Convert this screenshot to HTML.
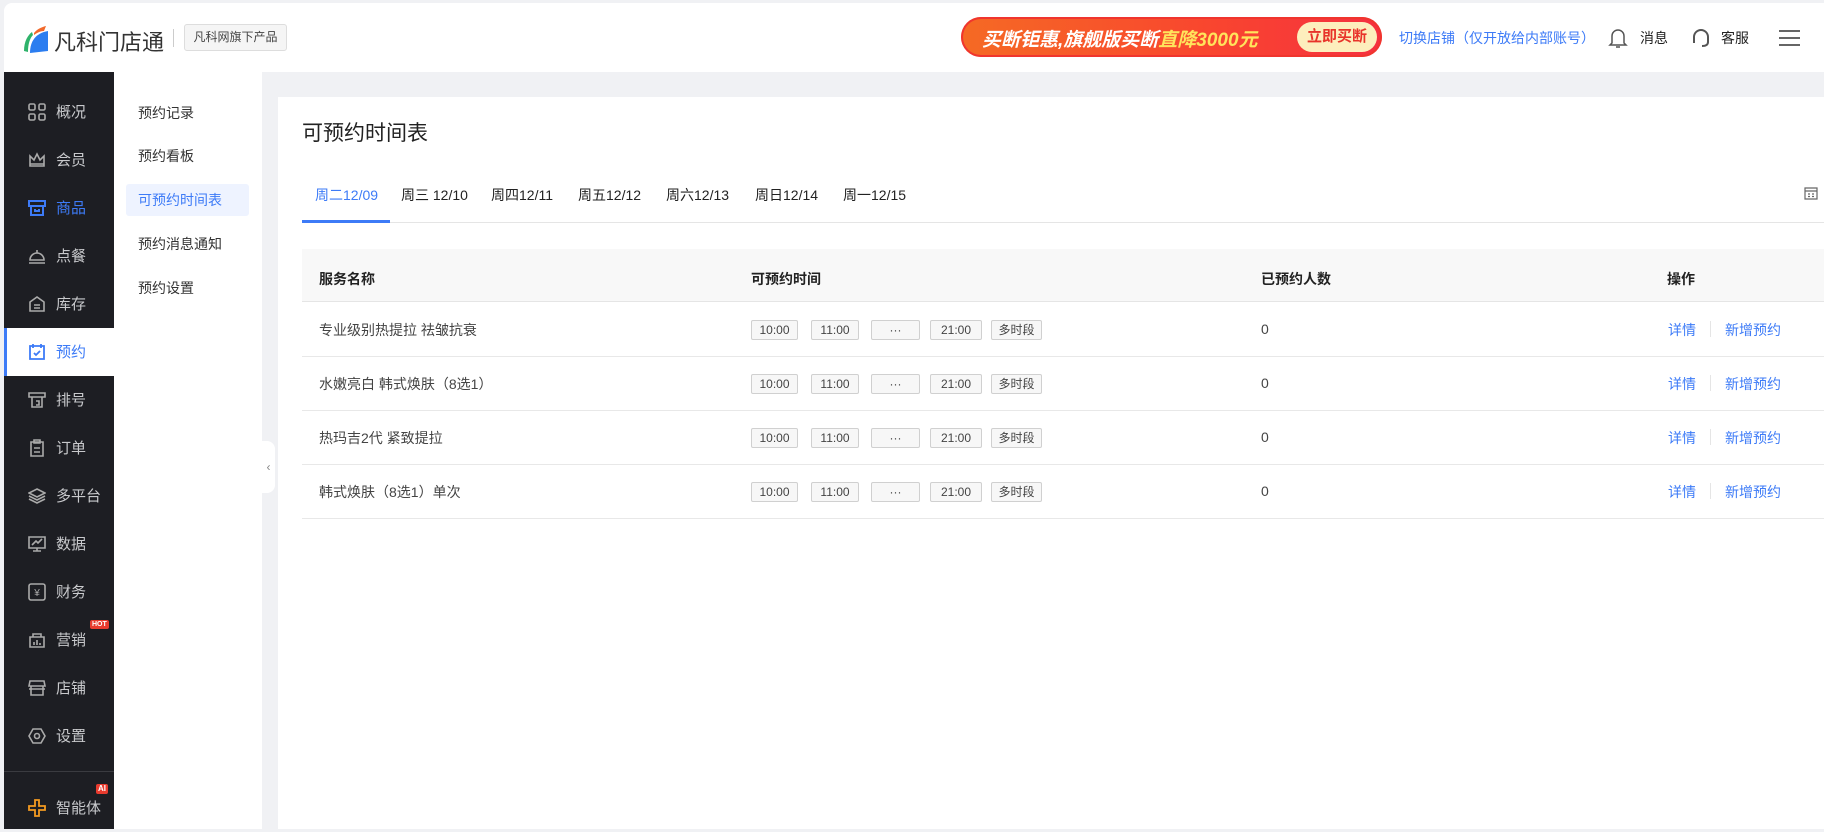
<!DOCTYPE html>
<html><head><meta charset="utf-8"><style>
*{margin:0;padding:0;box-sizing:border-box}
body{width:1824px;height:829px;overflow:hidden;background:#f0f1f4;font-family:"Liberation Sans","Noto Sans CJK SC",sans-serif;position:relative;color:#333}
.abs{position:absolute}
#top{left:4px;top:3px;width:1820px;height:69px;background:#fff;border-top-left-radius:8px}
#side{left:4px;top:72px;width:110px;height:757px;background:#1d1e23}
.it{position:absolute;left:0;width:110px;height:48px;color:#c8c9cc;font-size:15px}
.it svg{position:absolute;left:24px;top:15px}
.it span{position:absolute;left:52px;top:13px}
#sub{left:114px;top:72px;width:148px;height:757px;background:#fff}
.si{position:absolute;left:24px;font-size:14px;color:#333}
#card{left:278px;top:97px;width:1546px;height:732px;background:#fff}
.tab{position:absolute;top:88px;font-size:14px;color:#222}
.th{position:absolute;font-size:14px;font-weight:bold;color:#222;top:20px}
.row{position:absolute;left:24px;width:1522px;height:54px;border-bottom:1px solid #e8e8e8}
.row .n{position:absolute;left:17px;top:17px;font-size:14px;color:#444}
.chip{position:absolute;top:17px;height:20px;border:1px solid #d0d0d0;border-radius:2px;background:#f7f7f7;font-size:12px;line-height:18px;text-align:center;color:#444}
.cnt{position:absolute;left:959px;top:18px;font-size:14px;color:#444}
.act{position:absolute;top:17px;font-size:14px;color:#3d7bf7}
</style></head><body>
<div id="top" class="abs">
 <svg class="abs" style="left:16px;top:20px" width="30" height="32" viewBox="0 0 30 32"><path d="M4 28 C4 18 8 12 12 9 L13 12 C10 15 8 21 8 29Z" fill="#2fb36b"/><path d="M10 30 C10 18 16 10 28 8 L28 28 Z" fill="#2b7df0"/><path d="M14 10 C17 6 22 4 26 3 L24 8 C20 8 17 10 14 12Z" fill="#f2692b"/></svg>
 <div class="abs" style="left:50px;top:22px;font-size:22px;color:#333">凡科门店通</div>
 <div class="abs" style="left:169px;top:26px;width:1px;height:18px;background:#ccc"></div>
 <div class="abs" style="left:180px;top:21px;width:103px;height:27px;border:1px solid #ddd;border-radius:3px;background:#f5f5f5;font-size:12px;color:#444;text-align:center;line-height:25px">凡科网旗下产品</div>
 <div class="abs" style="left:957px;top:14px;width:421px;height:40px;border-radius:20px;background:linear-gradient(90deg,#f56a24,#f9452f 60%,#f53040);box-shadow:0 0 0 2px #f0352e inset"></div>
 <div class="abs" style="left:978px;top:22px;font-size:19px;font-weight:bold;font-style:italic;color:#fff;white-space:nowrap">买断钜惠,旗舰版买断<span style="color:#ffe45c">直降3000元</span></div>
 <div class="abs" style="left:1293px;top:19px;width:80px;height:30px;border-radius:15px;background:#fdeebd;color:#e8332a;font-weight:bold;font-size:15px;text-align:center;line-height:30px">立即买断</div>
 <div class="abs" style="left:1395px;top:25px;font-size:14px;color:#3d7bf7">切换店铺（仅开放给内部账号）</div>
 <svg class="abs" style="left:1604px;top:24px" width="20" height="22" viewBox="0 0 20 22"><path d="M4 16 V9 a6 6 0 0 1 12 0 V16 l2 2 H2 Z M8 20 h4" fill="none" stroke="#555" stroke-width="1.5"/></svg>
 <div class="abs" style="left:1636px;top:25px;font-size:14px;color:#222">消息</div>
 <svg class="abs" style="left:1686px;top:24px" width="22" height="22" viewBox="0 0 22 22"><path d="M4 13 V10 a7 7 0 0 1 14 0 V13 M4 11 v5 M18 11 v4 q0 4 -6 4" fill="none" stroke="#555" stroke-width="2"/></svg>
 <div class="abs" style="left:1717px;top:25px;font-size:14px;color:#222">客服</div>
 <div class="abs" style="left:1775px;top:27px;width:21px;height:2px;background:#666;box-shadow:0 7px 0 #666,0 14px 0 #666"></div>
</div>
<div id="side" class="abs">
 <div class="it" style="top:16px"><svg width="18" height="18"><g fill="none" stroke="#aaa" stroke-width="1.6"><rect x="1" y="1" width="6" height="6" rx="1.5"/><rect x="11" y="1" width="6" height="6" rx="1.5"/><rect x="1" y="11" width="6" height="6" rx="1.5"/><rect x="11" y="11" width="6" height="6" rx="1.5"/></g></svg><span>概况</span></div>
 <div class="it" style="top:64px"><svg width="18" height="18"><path d="M2 15 L2 5 L6 9 L9 3 L12 9 L16 5 L16 15 Z M2 13 H16" fill="none" stroke="#aaa" stroke-width="1.6"/></svg><span>会员</span></div>
 <div class="it" style="top:112px;color:#3d7bf7"><svg width="18" height="18"><path d="M1 2 H17 V7 H1 Z M3 7 V16 H15 V7 M7 10 V12 H11 V10" fill="none" stroke="#3d7bf7" stroke-width="2"/></svg><span>商品</span></div>
 <div class="it" style="top:160px"><svg width="18" height="18"><path d="M2 13 a7 7 0 0 1 14 0 Z M1 16 H17 M9 3 v3" fill="none" stroke="#aaa" stroke-width="1.6"/></svg><span>点餐</span></div>
 <div class="it" style="top:208px"><svg width="18" height="18"><path d="M2 7 L9 2 L16 7 V16 H2 Z M6 10 H12 M6 13 H12" fill="none" stroke="#aaa" stroke-width="1.6"/></svg><span>库存</span></div>
 <div class="it" style="top:256px;background:#fff;color:#3d7bf7;border-left:3px solid #3d7bf7;left:0;width:110px"><svg width="18" height="18" style="left:21px"><path d="M2 3 H16 V16 H2 Z M5 1 v4 M13 1 v4 M6 10 l2 2 l4 -4" fill="none" stroke="#3d7bf7" stroke-width="1.8"/></svg><span style="left:49px">预约</span></div>
 <div class="it" style="top:304px"><svg width="18" height="18"><path d="M1 2 H17 V6 H1 Z M4 6 V16 H14 V6 M8 10 h3 v4 h-3" fill="none" stroke="#aaa" stroke-width="1.6"/></svg><span>排号</span></div>
 <div class="it" style="top:352px"><svg width="18" height="18"><path d="M3 3 H15 V17 H3 Z M6 1 H12 V4 H6 Z M6 9 H12 M6 13 H12" fill="none" stroke="#aaa" stroke-width="1.6"/></svg><span>订单</span></div>
 <div class="it" style="top:400px"><svg width="18" height="18"><path d="M9 2 L17 6 L9 10 L1 6 Z M1 9 L9 13 L17 9 M1 12 L9 16 L17 12" fill="none" stroke="#aaa" stroke-width="1.6"/></svg><span>多平台</span></div>
 <div class="it" style="top:448px"><svg width="18" height="18"><path d="M1 2 H17 V13 H1 Z M9 13 V16 M5 16 H13 M4 10 L8 6 L10 8 L14 4" fill="none" stroke="#aaa" stroke-width="1.6"/></svg><span>数据</span></div>
 <div class="it" style="top:496px"><svg width="18" height="18"><rect x="1" y="1" width="16" height="16" rx="2" fill="none" stroke="#aaa" stroke-width="1.6"/><text x="9" y="13" font-size="10" fill="#aaa" text-anchor="middle">¥</text></svg><span>财务</span></div>
 <div class="it" style="top:544px"><svg width="18" height="18"><path d="M2 6 H16 V16 H2 Z M5 6 V3 H13 V6 M6 14 v-3 M9 14 v-5 M12 14 v-2" fill="none" stroke="#aaa" stroke-width="1.6"/></svg><span>营销</span><div class="abs" style="left:86px;top:4px;background:#e83b2e;color:#fff;font-size:7px;font-weight:bold;padding:0 2px;border-radius:2px;line-height:9px">HOT</div></div>
 <div class="it" style="top:592px"><svg width="18" height="18"><path d="M2 2 H16 L17 7 H1 Z M3 7 V16 H15 V7 M1 10 H17" fill="none" stroke="#aaa" stroke-width="1.6"/></svg><span>店铺</span></div>
 <div class="it" style="top:640px"><svg width="18" height="18"><path d="M5 2 H13 L17 9 L13 16 H5 L1 9 Z" fill="none" stroke="#aaa" stroke-width="1.6"/><circle cx="9" cy="9" r="2.5" fill="none" stroke="#aaa" stroke-width="1.6"/></svg><span>设置</span></div>
 <div class="abs" style="left:0;top:699px;width:110px;height:1px;background:#3a3b40"></div>
 <div class="it" style="top:712px"><svg width="18" height="18"><path d="M7 1 H11 V7 H17 V11 H11 V17 H7 V11 H1 V7 H7 Z" fill="none" stroke="#f39a21" stroke-width="1.8"/></svg><span>智能体</span><div class="abs" style="left:92px;top:0px;background:#e83b2e;color:#fff;font-size:8px;font-weight:bold;padding:0 2px;border-radius:2px;line-height:10px">AI</div></div>
</div>
<div id="sub" class="abs">
 <div class="si" style="top:31px">预约记录</div>
 <div class="si" style="top:74px">预约看板</div>
 <div class="abs" style="left:12px;top:112px;width:123px;height:32px;background:#eef3ff;border-radius:3px"></div>
 <div class="si" style="top:118px;color:#3d7bf7">可预约时间表</div>
 <div class="si" style="top:162px">预约消息通知</div>
 <div class="si" style="top:206px">预约设置</div>
</div>
<div class="abs" style="left:262px;top:441px;width:13px;height:52px;background:#fff;border-radius:0 8px 8px 0;color:#888;font-size:12px;line-height:52px;text-align:center">‹</div>
<div id="card" class="abs">
 <div class="abs" style="left:24px;top:20px;font-size:21px;color:#222">可预约时间表</div>
 <div class="tab" style="left:37px;color:#3d7bf7">周二12/09</div>
 <div class="tab" style="left:123px">周三 12/10</div>
 <div class="tab" style="left:213px">周四12/11</div>
 <div class="tab" style="left:300px">周五12/12</div>
 <div class="tab" style="left:388px">周六12/13</div>
 <div class="tab" style="left:477px">周日12/14</div>
 <div class="tab" style="left:565px">周一12/15</div>
 <div class="abs" style="left:24px;top:125px;width:1522px;height:1px;background:#e5e5e5"></div>
 <div class="abs" style="left:24px;top:123px;width:88px;height:3px;background:#3d7bf7"></div>
 <svg class="abs" style="left:1526px;top:89px" width="14" height="14"><path d="M1 2 H13 V13 H1 Z M1 5 H13 M4 8 h2 M8 8 h2 M4 10.5 h2 M8 10.5 h2" fill="none" stroke="#666" stroke-width="1.2"/></svg>
 <div class="abs" style="left:24px;top:152px;width:1522px;height:53px;background:#f8f8f8;border-bottom:1px solid #e5e5e5">
  <div class="th" style="left:17px">服务名称</div><div class="th" style="left:449px">可预约时间</div><div class="th" style="left:959px">已预约人数</div><div class="th" style="left:1365px">操作</div>
 </div>
 <div class="row" style="top:206px"><div class="n">专业级别热提拉 祛皱抗衰</div><div class="chip" style="left:449px;width:47px">10:00</div><div class="chip" style="left:509px;width:48px">11:00</div><div class="chip" style="left:569px;width:49px">···</div><div class="chip" style="left:628px;width:52px">21:00</div><div class="chip" style="left:689px;width:51px">多时段</div><div class="cnt">0</div><div class="act" style="left:1366px">详情</div><div class="abs" style="left:1408px;top:18px;width:1px;height:16px;background:#e5e5e5"></div><div class="act" style="left:1423px">新增预约</div></div>
 <div class="row" style="top:260px"><div class="n">水嫩亮白 韩式焕肤（8选1）</div><div class="chip" style="left:449px;width:47px">10:00</div><div class="chip" style="left:509px;width:48px">11:00</div><div class="chip" style="left:569px;width:49px">···</div><div class="chip" style="left:628px;width:52px">21:00</div><div class="chip" style="left:689px;width:51px">多时段</div><div class="cnt">0</div><div class="act" style="left:1366px">详情</div><div class="abs" style="left:1408px;top:18px;width:1px;height:16px;background:#e5e5e5"></div><div class="act" style="left:1423px">新增预约</div></div>
 <div class="row" style="top:314px"><div class="n">热玛吉2代 紧致提拉</div><div class="chip" style="left:449px;width:47px">10:00</div><div class="chip" style="left:509px;width:48px">11:00</div><div class="chip" style="left:569px;width:49px">···</div><div class="chip" style="left:628px;width:52px">21:00</div><div class="chip" style="left:689px;width:51px">多时段</div><div class="cnt">0</div><div class="act" style="left:1366px">详情</div><div class="abs" style="left:1408px;top:18px;width:1px;height:16px;background:#e5e5e5"></div><div class="act" style="left:1423px">新增预约</div></div>
 <div class="row" style="top:368px"><div class="n">韩式焕肤（8选1）单次</div><div class="chip" style="left:449px;width:47px">10:00</div><div class="chip" style="left:509px;width:48px">11:00</div><div class="chip" style="left:569px;width:49px">···</div><div class="chip" style="left:628px;width:52px">21:00</div><div class="chip" style="left:689px;width:51px">多时段</div><div class="cnt">0</div><div class="act" style="left:1366px">详情</div><div class="abs" style="left:1408px;top:18px;width:1px;height:16px;background:#e5e5e5"></div><div class="act" style="left:1423px">新增预约</div></div>
</div>
</body></html>
